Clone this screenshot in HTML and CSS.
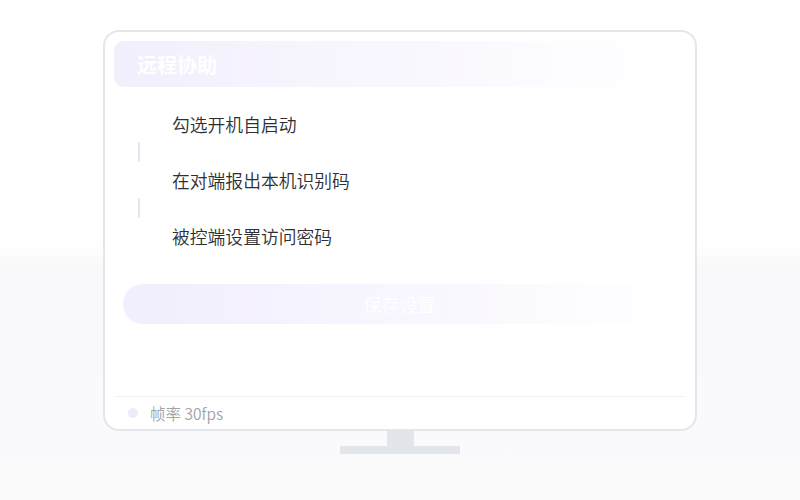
FILE: index.html
```html
<!DOCTYPE html>
<html lang="zh-CN">
<head>
    <meta charset="UTF-8">
    <title>远程协助</title>
    <link rel="stylesheet" href="styles.css">
</head>
<body>
    <div class="monitor">
        <div class="screen">
            <div class="header">
                <p class="title">远程协助</p>
                <svg class="help" width="16" height="16" viewBox="0 0 16 16">
                    <circle cx="8" cy="8" r="6.5" fill="none" stroke="#fff" stroke-width="1.5"/>
                    <path d="M6 6.3a2 2 0 1 1 2.6 1.9c-.4.2-.6.5-.6.9v.6" fill="none" stroke="#fff" stroke-width="1.5" stroke-linecap="round"/>
                    <circle cx="8" cy="11.6" r=".9" fill="#fff"/>
                </svg>
            </div>

            <div class="steps">
                <p class="step">勾选开机自启动</p>
                <div class="connector"></div>
                <p class="step">在对端报出本机识别码</p>
                <div class="connector"></div>
                <p class="step">被控端设置访问密码</p>
            </div>

            <button class="save-button">保存设置</button>

            <div class="footer">
                <span class="dot"></span>
                <span class="fps">帧率 30fps</span>
            </div>
        </div>
        <div class="neck"></div>
        <div class="base"></div>
    </div>
</body>
</html>
```

FILE: styles.css
```css
body {
    margin: 0;
    height: 500px;
    font-family: "Noto Sans CJK SC", "Noto Sans", sans-serif;
    background: linear-gradient(180deg, #ffffff 0%, #ffffff 48%, #f9f9fb 54%, #fafafb 100%);
    color: #333;
}
.monitor {
    width: 594px;
    margin: 0 auto;
    padding-top: 30px;
    display: flex;
    flex-direction: column;
    align-items: center;
}
.screen {
    box-sizing: border-box;
    width: 594px;
    height: 401px;
    border: 2px solid #e3e6eb;
    border-radius: 16px;
    background: white;
    padding: 9px 10px 0 9px;
    display: flex;
    flex-direction: column;
}
.header {
    height: 46px;
    border-radius: 9px;
    background: linear-gradient(90deg, #f2effd 0%, #f8f6fe 45%, #fdfcff 80%, #ffffff 100%);
    display: flex;
    align-items: center;
    justify-content: space-between;
    padding: 0 24px 0 23px;
}
.title {
    margin: 0;
    color: white;
    font-size: 20px;
    font-weight: 700;
}
.help {
    opacity: 0.9;
}
.steps {
    padding: 25px 0 0 24px;
}
.step {
    margin: 0;
    padding-left: 34px;
    font-size: 17.8px;
    font-weight: 350;
    line-height: 24px;
    color: #2f2f33;
}
.connector {
    width: 2px;
    height: 20px;
    margin: 6px 0;
    background: #e6e4f2;
    border-radius: 1px;
}
.save-button {
    margin: 36px 9px 0 9px;
    height: 40px;
    border: none;
    border-radius: 20px;
    background: linear-gradient(90deg, #f1eefd 0%, #f7f5fe 45%, #fdfcff 85%, #ffffff 100%);
    color: white;
    font-family: inherit;
    font-size: 18px;
    font-weight: 350;
}
.footer {
    margin-top: auto;
    margin-left: 1px;
    border-top: 1px solid #eef0f3;
    height: 32px;
    display: flex;
    align-items: center;
    padding-left: 13px;
}
.dot {
    width: 10px;
    height: 10px;
    border-radius: 50%;
    background: #eceafb;
    margin-right: 12px;
}
.fps {
    font-size: 15.5px;
    font-weight: 350;
    color: #9ea3ab;
}
.neck {
    width: 27px;
    height: 15px;
    background: #e2e6ea;
}
.base {
    width: 120px;
    height: 8px;
    background: #e2e6ea;
}
```
